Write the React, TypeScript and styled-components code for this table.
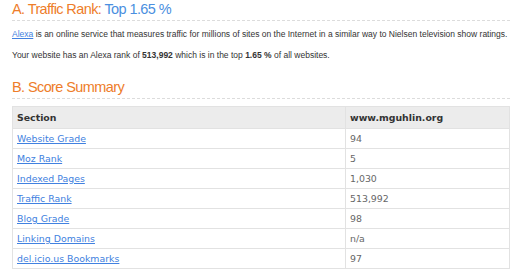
import React from "react";
import styled, { createGlobalStyle } from "styled-components";

const GlobalStyle = createGlobalStyle`
  body {
    margin: 0;
    background: #ffffff;
    font-family: "Liberation Sans", Arial, sans-serif;
  }
`;

const Page = styled.div`
  width: 498px;
  padding: 1px 2px 0 12px;
`;

const Heading = styled.h2`
  margin: 0;
  padding-bottom: 3px;
  font-size: 14.5px;
  letter-spacing: -0.6px;
  font-weight: normal;
  line-height: 16px;
  color: #ee7d2a;
  border-bottom: 1px dashed #dcdcdc;
`;

const Highlight = styled.span`
  color: #4a8fe0;
`;

const Paragraph = styled.p<{ $top: number }>`
  margin: 0;
  font-size: 8.5px;
  line-height: 10px;
  color: #333333;
  padding-top: ${(p) => p.$top}px;
`;

const Link = styled.a`
  color: #4181e0;
  text-decoration: underline;
`;

const Section = styled.section<{ $top: number }>`
  margin-top: ${(p) => p.$top}px;
`;

const Table = styled.table`
  width: 100%;
  margin-top: 7px;
  border-collapse: collapse;
  font-family: "DejaVu Sans", Verdana, sans-serif;
  font-size: 9.4px;
  border: 1px solid #e2e2e2;
`;

const HeadCell = styled.th`
  background: #ececec;
  color: #333333;
  font-weight: bold;
  text-align: left;
  height: 21px;
  padding: 0 4px;
  border-bottom: 1px solid #e2e2e2;
  border-left: 1px solid #e2e2e2;
`;

const Cell = styled.td`
  height: 19px;
  padding: 0 4px;
  color: #666666;
  border-bottom: 1px solid #e2e2e2;
  border-left: 1px solid #e2e2e2;
`;

const LabelCell = styled(Cell)`
  width: 324px;
`;

const rows: [string, string][] = [
  ["Website Grade", "94"],
  ["Moz Rank", "5"],
  ["Indexed Pages", "1,030"],
  ["Traffic Rank", "513,992"],
  ["Blog Grade", "98"],
  ["Linking Domains", "n/a"],
  ["del.icio.us Bookmarks", "97"],
];

export default function App() {
  return (
    <>
      <GlobalStyle />
      <Page>
        <Heading>
          A. Traffic Rank: <Highlight>Top 1.65 %</Highlight>
        </Heading>
        <Paragraph $top={8}>
          <Link href="#">Alexa</Link> is an online service that measures traffic for millions of sites on the
          Internet in a similar way to Nielsen television show ratings.
        </Paragraph>
        <Paragraph $top={11}>
          Your website has an Alexa rank of <b>513,992</b> which is in the top <b>1.65 %</b> of all websites.
        </Paragraph>
        <Section $top={19}>
          <Heading>B. Score Summary</Heading>
          <Table>
            <thead>
              <tr>
                <HeadCell>Section</HeadCell>
                <HeadCell>www.mguhlin.org</HeadCell>
              </tr>
            </thead>
            <tbody>
              {rows.map(([label, value]) => (
                <tr key={label}>
                  <LabelCell>
                    <Link href="#">{label}</Link>
                  </LabelCell>
                  <Cell>{value}</Cell>
                </tr>
              ))}
            </tbody>
          </Table>
        </Section>
      </Page>
    </>
  );
}
